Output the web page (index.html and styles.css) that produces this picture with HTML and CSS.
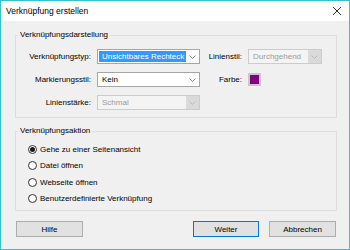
FILE: index.html
```html
<!DOCTYPE html>
<html lang="de">
  <head>
    <meta charset="UTF-8" />
    <title>Verknüpfung erstellen</title>
    <link rel="stylesheet" href="styles.css">
  </head>
  <body>
    <div class="fenster">
      <div class="titelleiste">
        <span class="titel">Verknüpfung erstellen</span>
        <svg class="schliessen" width="10" height="10" viewBox="0 0 10 10">
          <path d="M1 1 L9 9 M9 1 L1 9" stroke="#333" stroke-width="1" />
        </svg>
      </div>

      <div class="inhalt">
        <fieldset class="gruppe">
          <legend>Verknüpfungsdarstellung</legend>
          <div class="formular">
            <label class="feld-label">Verknüpfungstyp:</label>
            <div class="combo">
              <span class="combo-text markiert">Unsichtbares Rechteck</span>
              <span class="combo-pfeil">
                <svg width="7" height="4" viewBox="0 0 7 4"><path d="M0.5 0.5 L3.5 3.5 L6.5 0.5" fill="none" stroke="#888" /></svg>
              </span>
            </div>
            <label class="feld-label">Linienstil:</label>
            <div class="combo gesperrt">
              <span class="combo-text">Durchgehend</span>
              <span class="combo-pfeil">
                <svg width="7" height="4" viewBox="0 0 7 4"><path d="M0.5 0.5 L3.5 3.5 L6.5 0.5" fill="none" stroke="#b8b8b8" /></svg>
              </span>
            </div>

            <label class="feld-label">Markierungsstil:</label>
            <div class="combo">
              <span class="combo-text">Kein</span>
              <span class="combo-pfeil">
                <svg width="7" height="4" viewBox="0 0 7 4"><path d="M0.5 0.5 L3.5 3.5 L6.5 0.5" fill="none" stroke="#888" /></svg>
              </span>
            </div>
            <label class="feld-label">Farbe:</label>
            <div class="farbe"><span class="farbfeld"></span></div>

            <label class="feld-label">Linienstärke:</label>
            <div class="combo gesperrt">
              <span class="combo-text">Schmal</span>
              <span class="combo-pfeil">
                <svg width="7" height="4" viewBox="0 0 7 4"><path d="M0.5 0.5 L3.5 3.5 L6.5 0.5" fill="none" stroke="#b8b8b8" /></svg>
              </span>
            </div>
          </div>
        </fieldset>

        <fieldset class="gruppe aktion">
          <legend>Verknüpfungsaktion</legend>
          <div class="radio-liste">
            <label class="radio"><span class="kreis an"></span>Gehe zu einer Seitenansicht</label>
            <label class="radio"><span class="kreis"></span>Datei öffnen</label>
            <label class="radio"><span class="kreis"></span>Webseite öffnen</label>
            <label class="radio"><span class="kreis"></span>Benutzerdefinierte Verknüpfung</label>
          </div>
        </fieldset>

        <div class="knoepfe">
          <button class="knopf">Hilfe</button>
          <div class="knoepfe-rechts">
            <button class="knopf standard">Weiter</button>
            <button class="knopf">Abbrechen</button>
          </div>
        </div>
      </div>
    </div>
  </body>
</html>
```

FILE: styles.css
```css
body {
  margin: 0;
  font-family: "Liberation Sans", Arial, sans-serif;
  font-size: 8px;
  color: #000;
}

.fenster {
  width: 350px;
  height: 250px;
  box-sizing: border-box;
  border: 1px solid #3ac3c6;
  background-color: #f0f0f0;
  display: flex;
  flex-direction: column;
}

.titelleiste {
  height: 20px;
  background-color: #fff;
  display: flex;
  align-items: center;
  justify-content: space-between;
  padding: 0 7px 0 5px;
  font-size: 8.5px;
}

.inhalt {
  padding: 0 12px 0 14px;
}

.gruppe {
  margin: 8px 0 0 0;
  padding: 8px 0 7px 2px;
  border: 1px solid #dcdcdc;
  min-width: 0;
}

.gruppe legend {
  padding: 0 2px;
  line-height: 12px;
}

.formular {
  display: grid;
  grid-template-columns: 73px 103px 36px 74px;
  grid-auto-rows: 15px;
  column-gap: 6px;
  row-gap: 8px;
  align-items: center;
}

.feld-label {
  text-align: right;
  white-space: nowrap;
}

.combo {
  height: 15px;
  box-sizing: border-box;
  border: 1px solid #a6a6a6;
  background-color: #fff;
  display: flex;
}

.combo-text {
  flex: 1;
  display: flex;
  align-items: center;
  padding-left: 3px;
  margin: 1px 0 1px 1px;
  white-space: nowrap;
  overflow: hidden;
}

.combo-text.markiert {
  background-color: #3399ff;
  color: #fff;
}

.combo-pfeil {
  width: 13px;
  display: flex;
  align-items: center;
  justify-content: center;
}

.combo.gesperrt {
  border-color: #cccccc;
  background-color: #f4f4f4;
  color: #9a9a9a;
}

.combo.gesperrt .combo-pfeil {
  background-color: #dadada;
}

.farbe {
  width: 13px;
  height: 13px;
  box-sizing: border-box;
  background-color: #c8c8c8;
  padding: 2px;
}

.farbfeld {
  display: block;
  width: 9px;
  height: 9px;
  background-color: #800080;
}

.aktion {
  margin-top: 7px;
  padding: 4px 0 3px 2px;
}

.radio-liste {
  margin-left: 10px;
  display: flex;
  flex-direction: column;
}

.radio {
  height: 16.5px;
  display: flex;
  align-items: center;
  gap: 3px;
}

.kreis {
  width: 9px;
  height: 9px;
  box-sizing: border-box;
  border: 1px solid #333;
  border-radius: 50%;
  background-color: #fff;
  display: flex;
  align-items: center;
  justify-content: center;
}

.kreis.an::after {
  content: "";
  width: 5px;
  height: 5px;
  border-radius: 50%;
  background-color: #1a1a1a;
}

.knoepfe {
  margin: 10px 1px 0 1px;
  display: flex;
  justify-content: space-between;
}

.knoepfe-rechts {
  display: flex;
  gap: 10px;
}

.knopf {
  width: 67px;
  height: 16px;
  padding: 0;
  font-family: inherit;
  font-size: 8px;
  color: #000;
  background-color: #e1e1e1;
  border: 1px solid #adadad;
}

.knopf.standard {
  width: 66px;
  border-color: #0078d7;
}
```
